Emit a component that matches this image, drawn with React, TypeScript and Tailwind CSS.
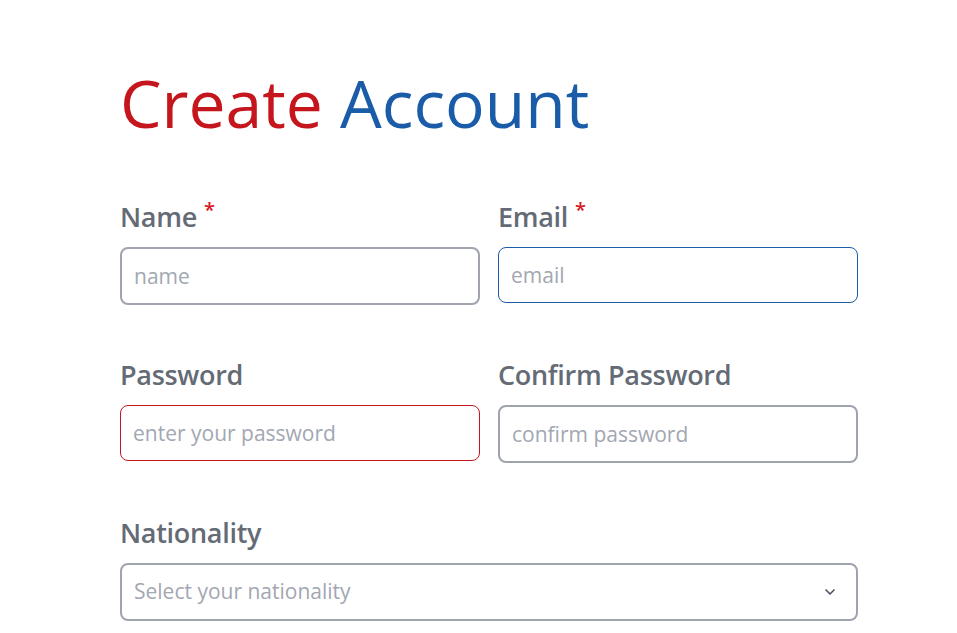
import { ChevronDown } from "lucide-react";

const font = { fontFamily: "'Open Sans', Lato, sans-serif" };

function Label({ text, required }: { text: string; required?: boolean }) {
  return (
    <label className="flex items-start text-[27px] font-semibold leading-[36px] tracking-[-0.3px] text-[#646b75]">
      {text}
      {required && <span className="ml-[7px] mt-[1px] text-[20px] leading-none text-[#d7191f]">*</span>}
    </label>
  );
}

const inputBase =
  "rounded-lg px-3 text-[21px] text-gray-700 placeholder:text-[#a2a7b2] outline-none";

export default function App() {
  return (
    <div className="min-h-screen bg-white pl-[120px] pt-[64px]" style={font}>
      <h1 className="text-[66px] font-normal leading-[76px]">
        <span className="text-[#c5161d]">Create</span> <span className="text-[#1b5ca8]">Account</span>
      </h1>

      <form className="mt-[59px] grid w-[738px] grid-cols-2 gap-x-[18px] gap-y-[52px]">
        <div className="flex flex-col gap-[12px]">
          <Label text="Name" required />
          <input placeholder="name" className={`h-[58px] border-2 border-[#9ea3ae] ${inputBase}`} />
        </div>
        <div className="flex flex-col gap-[12px]">
          <Label text="Email" required />
          <input placeholder="email" className={`h-[56px] border border-[#1b5ca8] ${inputBase}`} />
        </div>
        <div className="flex flex-col gap-[12px]">
          <Label text="Password" />
          <input
            type="password"
            placeholder="enter your password"
            className={`h-[56px] border border-[#c5161d] ${inputBase}`}
          />
        </div>
        <div className="flex flex-col gap-[12px]">
          <Label text="Confirm Password" />
          <input
            type="password"
            placeholder="confirm password"
            className={`h-[58px] border-2 border-[#9ea3ae] ${inputBase}`}
          />
        </div>
        <div className="col-span-2 flex flex-col gap-[12px]">
          <Label text="Nationality" />
          <div className="flex h-[58px] items-center justify-between rounded-lg border-2 border-[#9ea3ae] px-3">
            <span className="text-[21px] text-[#a2a7b2]">Select your nationality</span>
            <ChevronDown className="mr-[6px] size-4 text-[#4b5563]" strokeWidth={2.5} />
          </div>
        </div>
      </form>
    </div>
  );
}
